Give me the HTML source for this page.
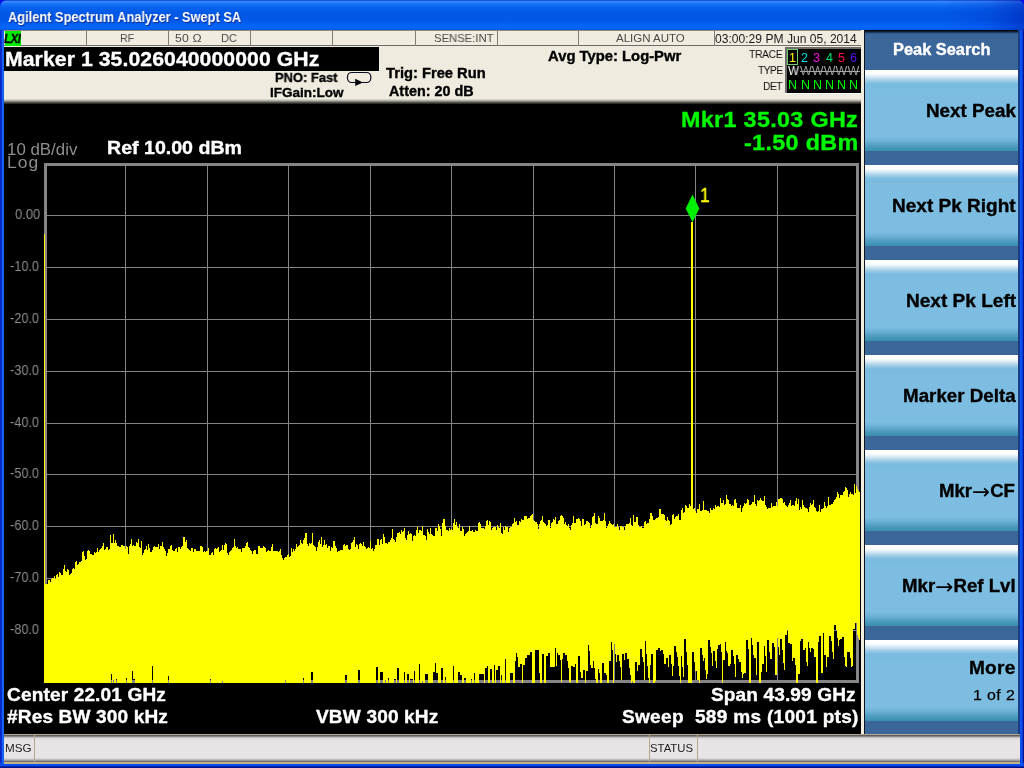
<!DOCTYPE html>
<html lang="en"><head><meta charset="utf-8">
<title>Agilent Spectrum Analyzer - Swept SA</title>
<style>
html,body{margin:0;padding:0;background:#000;}
body{width:1024px;height:768px;position:relative;overflow:hidden;font-family:"Liberation Sans",sans-serif;}
.a{position:absolute;}
.t{position:absolute;line-height:1;white-space:pre;will-change:transform;}
.ar{font-family:"DejaVu Sans",sans-serif;font-weight:normal;font-size:21px;line-height:0;position:relative;top:2px;-webkit-text-stroke:0;}
#win{left:0;top:0;width:1024px;height:768px;background:#0a58e8;}
#title{left:0;top:0;width:1024px;height:30px;border-radius:7px 7px 0 0;
 background:linear-gradient(to bottom,#0a3cd6 0px,#3688f8 1.5px,#1872f6 4px,#0662ee 8px,#0258e6 13px,#0257e8 20px,#0362f6 25px,#0466fa 28px,#0356e4 30px);}
#lb{left:0;top:30px;width:4px;height:738px;background:linear-gradient(to right,#0a22c4 0px,#0a30d4 1.5px,#1766f2 2px,#1262ee 4px);}
#rb{left:1020px;top:30px;width:4px;height:738px;background:linear-gradient(to right,#0a52f0 0px,#0a4eee 2px,#0838d0 2.6px,#001694 3.3px,#00108a 4px);}
#bb{left:0;top:763px;width:1024px;height:5px;background:linear-gradient(to bottom,#0a52f0 0px,#0a4eee 2.4px,#0632c8 3.2px,#001490 4px,#00108a 5px);}
#hdr{left:4px;top:30px;width:857px;height:69px;background:#efebdf;}
#hshadow{left:4px;top:99px;width:857px;height:6px;background:linear-gradient(to bottom,#e6e2d6 0,#c4c1b8 1.2px,#8a8882 2.4px,#45443f 3.8px,#000 6px);}
#row{left:4px;top:30px;width:857px;height:16px;border-top:1px solid #8c897f;border-bottom:1px solid #6e6c66;box-sizing:border-box;background:#f0ecdf;}
.sep{position:absolute;top:31px;height:15px;width:1px;background:#7f7d76;}
#black{left:4px;top:104px;width:857px;height:630px;background:#000;}
#strip{left:861px;top:30px;width:3px;height:704px;background:#f2eee0;}
#strip2{left:864px;top:30px;width:1px;height:704px;background:#10141c;}
#menu{left:865px;top:30px;width:155px;height:704px;background:#3a6699;}
.key{position:absolute;left:865px;width:153px;height:81px;
 background:linear-gradient(to bottom,#ffffff 0px,#ffffff 3px,#eef6fb 5px,#c6e0f0 8px,#9acbe6 11px,#7fbde0 13.5px,#79bbdf 16px,#7cbde1 20px,#7cbde1 67px,#72b5da 70px,#62a9ce 73px,#4f9cc0 76px,#4194b4 79px,#3a8eae 81px);}
#stat{left:4px;top:734px;width:1016px;height:29.5px;
 background:linear-gradient(to bottom,#b6a68c 0px,#b6a68c 1px,#4c4a4c 1px,#787678 2.2px,#b8b5b7 3.2px,#dcd9db 4.5px,#e8e4e6 6px,#e8e4e6 23.5px,#d2cfd1 25px,#9c9a9c 26.5px,#4c4a4c 28.4px,#c4b28c 28.5px,#c4b28c 29.5px);}
</style></head><body>
<div id="win" class="a"></div>
<div class="a" style="left:0;top:0;width:1024px;height:9px;background:#0410e4;"></div>
<div id="title" class="a"></div>
<div class="a" style="left:940px;top:0;width:84px;height:30px;border-radius:0 7px 0 0;background:linear-gradient(to right,rgba(0,30,180,0) 0,rgba(0,30,180,0.18) 50px,rgba(0,24,170,0.5) 84px);"></div>
<div id="lb" class="a"></div><div id="rb" class="a"></div><div id="bb" class="a"></div>

<span class="t" style="top:10.35px;font-size:14px;color:#fff;font-weight:bold;left:8.27px;transform:scaleX(0.9154);transform-origin:left center;text-shadow:1px 1px 1px #0a2a8c;">Agilent Spectrum Analyzer - Swept SA</span>
<div id="hdr" class="a"></div><div id="hshadow" class="a"></div><div id="row" class="a"></div>
<div class="sep" style="left:86px"></div>
<div class="sep" style="left:168px"></div>
<div class="sep" style="left:250px"></div>
<div class="sep" style="left:332px"></div>
<div class="sep" style="left:415px"></div>
<div class="sep" style="left:497px"></div>
<div class="sep" style="left:578px"></div>
<div class="sep" style="left:714px"></div>
<div class="a" style="left:5px;top:31px;width:16px;height:15px;background:#00f000;"></div>
<span class="t" style="top:33.02px;font-size:12.5px;color:#000;font-weight:bold;left:4.33px;letter-spacing:-0.389px;transform:scaleX(0.9000);transform-origin:left center;font-style:italic;-webkit-text-stroke:0.35px currentColor;">LXI</span>
<span class="t" style="top:33.07px;font-size:11.5px;color:#4c4a46;left:119.57px;transform:scaleX(0.9309);transform-origin:left center;">RF</span>
<span class="t" style="top:33.07px;font-size:11.5px;color:#4c4a46;left:175.17px;letter-spacing:0.165px;transform:scaleX(1.0600);transform-origin:left center;">50 Ω</span>
<span class="t" style="top:33.07px;font-size:11.5px;color:#4c4a46;left:220.94px;transform:scaleX(0.9600);transform-origin:left center;">DC</span>
<span class="t" style="top:33.07px;font-size:11.5px;color:#4c4a46;left:434.26px;transform:scaleX(0.9792);transform-origin:left center;">SENSE:INT</span>
<span class="t" style="top:33.07px;font-size:11.5px;color:#4c4a46;left:615.75px;transform:scaleX(0.9963);transform-origin:left center;">ALIGN AUTO</span>
<span class="t" style="top:32.64px;font-size:12px;color:#1a1a1a;left:715.30px;transform:scaleX(1.0071);transform-origin:left center;">03:00:29 PM Jun 05, 2014</span>
<div class="a" style="left:4px;top:47px;width:375px;height:24px;background:#000;"></div>
<span class="t" style="top:48.87px;font-size:20px;color:#fff;font-weight:bold;left:5.17px;letter-spacing:0.068px;transform:scaleX(1.0600);transform-origin:left center;-webkit-text-stroke:0.35px currentColor;">Marker 1 35.026040000000 GHz</span>
<span class="t" style="top:71.47px;font-size:13.5px;color:#000;font-weight:bold;left:274.79px;transform:scaleX(0.9570);transform-origin:left center;-webkit-text-stroke:0.35px currentColor;">PNO: Fast</span>
<span class="t" style="top:86.07px;font-size:13.5px;color:#000;font-weight:bold;left:269.50px;-webkit-text-stroke:0.35px currentColor;">IFGain:Low</span>
<svg class="a" style="left:344px;top:69px" width="30" height="20" viewBox="344 69 30 20"><rect x="347.5" y="72.5" width="23.3" height="10" rx="4.2" ry="4.2" fill="none" stroke="#0c0c20" stroke-width="1.2"/><path d="M355.2 78.7 L363 82.4 L355.2 86.1 Z" fill="#08080f"/></svg>
<span class="t" style="top:65.65px;font-size:14px;color:#000;font-weight:bold;left:385.99px;transform:scaleX(1.0507);transform-origin:left center;-webkit-text-stroke:0.35px currentColor;">Trig: Free Run</span>
<span class="t" style="top:83.55px;font-size:14px;color:#000;font-weight:bold;left:389.14px;transform:scaleX(1.0258);transform-origin:left center;-webkit-text-stroke:0.35px currentColor;">Atten: 20 dB</span>
<span class="t" style="top:49.15px;font-size:14px;color:#000;font-weight:bold;left:547.74px;transform:scaleX(1.0578);transform-origin:left center;-webkit-text-stroke:0.35px currentColor;">Avg Type: Log-Pwr</span>
<span class="t" style="top:48.87px;font-size:11.5px;color:#111;left:749.27px;letter-spacing:-0.396px;transform:scaleX(0.9000);transform-origin:left center;">TRACE</span>
<span class="t" style="top:65.27px;font-size:11.5px;color:#111;left:757.77px;letter-spacing:-0.676px;transform:scaleX(0.9000);transform-origin:left center;">TYPE</span>
<span class="t" style="top:81.07px;font-size:11.5px;color:#111;left:763.10px;letter-spacing:-0.597px;transform:scaleX(0.9000);transform-origin:left center;">DET</span>
<div class="a" style="left:785px;top:47px;width:76px;height:47px;background:#fff;"></div>
<div class="a" style="left:785px;top:47px;width:76px;height:46px;background:#6e6c66;"></div>
<div class="a" style="left:787px;top:49px;width:74px;height:44px;background:#000;"></div>
<div class="a" style="left:787px;top:49px;width:11px;height:16px;border:1px solid #70d070;box-sizing:border-box;"></div>
<span class="t" style="top:51.62px;font-size:12.5px;color:#ffff00;left:788.98px;">1</span>
<span class="t" style="top:78.62px;font-size:12.5px;color:#00ff00;left:788.40px;">N</span>
<span class="t" style="top:51.62px;font-size:12.5px;color:#00e0e8;left:801.38px;">2</span>
<span class="t" style="top:78.62px;font-size:12.5px;color:#00ff00;left:800.55px;">N</span>
<span class="t" style="top:51.62px;font-size:12.5px;color:#f010e0;left:813.40px;">3</span>
<span class="t" style="top:78.62px;font-size:12.5px;color:#00ff00;left:812.70px;">N</span>
<span class="t" style="top:51.62px;font-size:12.5px;color:#00e070;left:825.68px;">4</span>
<span class="t" style="top:78.62px;font-size:12.5px;color:#00ff00;left:824.85px;">N</span>
<span class="t" style="top:51.62px;font-size:12.5px;color:#ff1050;left:837.70px;">5</span>
<span class="t" style="top:78.62px;font-size:12.5px;color:#00ff00;left:837.00px;">N</span>
<span class="t" style="top:51.62px;font-size:12.5px;color:#5a10f8;left:849.85px;">6</span>
<span class="t" style="top:78.62px;font-size:12.5px;color:#00ff00;left:849.15px;">N</span>
<span class="t" style="top:65.02px;font-size:12.5px;color:#fff;left:787.80px;transform:scaleX(0.9362);transform-origin:left center;">W</span>
<span class="t" style="top:65.02px;font-size:12.5px;color:#9a9a9a;left:800.20px;letter-spacing:0.075px;">WWWWW</span>
<div class="a" style="left:800px;top:71px;width:60px;height:1px;background:#a8a8a8;"></div>
<div id="black" class="a"></div><div id="strip" class="a"></div><div id="strip2" class="a"></div>
<svg class="a" style="left:0;top:0" width="1024" height="768" viewBox="0 0 1024 768" shape-rendering="crispEdges">
<path d="M44 163H859V683H44Z M47 166V680H856V166Z" fill="#868486" fill-rule="evenodd"/>
<path d="M125 166h1v514h-1zM207 166h1v514h-1zM288 166h1v514h-1zM370 166h1v514h-1zM451 166h1v514h-1zM533 166h1v514h-1zM614 166h1v514h-1zM695 166h1v514h-1zM777 166h1v514h-1zM47 215h809v1h-809zM47 267h809v1h-809zM47 319h809v1h-809zM47 371h809v1h-809zM47 423h809v1h-809zM47 474h809v1h-809zM47 526h809v1h-809zM47 578h809v1h-809zM47 630h809v1h-809z" fill="#868486"/>
<path d="M44 584V584H45V584H46V584H47V584H48V580H49V580H50V582H51V579H52V578H53V578H54V576H55V579H56V575H57V574H58V577H59V572H60V573H61V575H62V575H63V569H64V565H65V571H66V572H67V569H68V570H69V575H70V574H71V573H72V569H73V568H74V569H75V562H76V561H77V565H78V564H79V562H80V562H81V561H82V552H83V551H84V556H85V560H86V559H87V551H88V550H89V551H90V554H91V554H92V555H93V555H94V552H95V553H96V552H97V548H98V552H99V550H100V549H101V548H102V546H103V543H104V550H105V549H106V547H107V547H108V550H109V549H110V535H111V543H112V543H113V534H114V543H115V540H116V543H117V546H118V546H119V547H120V547H121V545H122V545H123V546H124V546H125V549H126V546H127V547H128V554H129V546H130V544H131V539H132V546H133V545H134V546H135V546H136V542H137V543H138V539H139V547H140V548H141V541H142V555H143V553H144V550H145V549H146V546H147V550H148V544H149V548H150V552H151V552H152V550H153V547H154V546H155V547H156V547H157V547H158V544H159V549H160V546H161V546H162V542H163V547H164V549H165V551H166V556H167V553H168V549H169V549H170V546H171V545H172V550H173V551H174V551H175V549H176V548H177V552H178V547H179V547H180V549H181V547H182V546H183V537H184V537H185V542H186V540H187V548H188V549H189V550H190V551H191V548H192V548H193V552H194V549H195V549H196V551H197V551H198V551H199V551H200V546H201V546H202V547H203V552H204V551H205V552H206V551H207V551H208V548H209V555H210V555H211V553H212V552H213V555H214V549H215V548H216V549H217V548H218V547H219V552H220V551H221V550H222V545H223V550H224V545H225V543H226V544H227V553H228V555H229V552H230V551H231V550H232V548H233V547H234V539H235V546H236V548H237V547H238V549H239V549H240V549H241V552H242V548H243V548H244V548H245V546H246V543H247V542H248V547H249V548H250V550H251V551H252V554H253V551H254V550H255V550H256V554H257V554H258V546H259V546H260V548H261V548H262V548H263V546H264V547H265V548H266V552H267V551H268V550H269V551H270V551H271V547H272V544H273V551H274V551H275V551H276V551H277V551H278V552H279V551H280V549H281V555H282V558H283V560H284V558H285V557H286V557H287V555H288V554H289V557H290V556H291V548H292V552H293V549H294V551H295V549H296V544H297V547H298V546H299V545H300V540H301V543H302V544H303V540H304V538H305V533H306V533H307V544H308V546H309V543H310V544H311V543H312V533H313V545H314V546H315V547H316V551H317V547H318V542H319V540H320V544H321V537H322V547H323V545H324V540H325V545H326V544H327V548H328V546H329V546H330V551H331V547H332V548H333V541H334V541H335V546H336V548H337V552H338V551H339V551H340V550H341V550H342V550H343V545H344V544H345V546H346V545H347V545H348V549H349V550H350V549H351V543H352V542H353V540H354V537H355V547H356V544H357V545H358V549H359V544H360V543H361V544H362V546H363V542H364V546H365V547H366V549H367V548H368V547H369V548H370V541H371V549H372V548H373V551H374V549H375V545H376V545H377V539H378V539H379V545H380V540H381V539H382V544H383V534H384V537H385V543H386V543H387V544H388V542H389V542H390V540H391V538H392V529H393V539H394V540H395V542H396V537H397V533H398V533H399V532H400V534H401V530H402V532H403V531H404V528H405V538H406V540H407V535H408V531H409V534H410V533H411V534H412V541H413V536H414V535H415V536H416V530H417V527H418V533H419V530H420V530H421V531H422V526H423V535H424V535H425V536H426V540H427V529H428V532H429V534H430V528H431V534H432V535H433V536H434V536H435V528H436V528H437V531H438V524H439V526H440V529H441V536H442V523H443V519H444V519H445V526H446V530H447V530H448V531H449V528H450V530H451V529H452V530H453V523H454V519H455V525H456V522H457V527H458V528H459V524H460V531H461V531H462V527H463V529H464V536H465V534H466V533H467V532H468V531H469V526H470V531H471V531H472V530H473V532H474V532H475V530H476V531H477V531H478V523H479V522H480V524H481V528H482V528H483V528H484V529H485V526H486V521H487V520H488V525H489V521H490V522H491V530H492V528H493V527H494V527H495V527H496V530H497V525H498V527H499V528H500V523H501V533H502V534H503V527H504V530H505V526H506V527H507V527H508V532H509V528H510V527H511V527H512V524H513V523H514V518H515V522H516V521H517V525H518V525H519V521H520V522H521V519H522V520H523V520H524V516H525V516H526V516H527V519H528V518H529V518H530V516H531V515H532V514H533V520H534V521H535V522H536V522H537V524H538V529H539V524H540V521H541V520H542V516H543V522H544V523H545V524H546V526H547V525H548V520H549V520H550V528H551V523H552V522H553V519H554V520H555V517H556V524H557V524H558V521H559V520H560V516H561V515H562V516H563V518H564V524H565V522H566V525H567V526H568V524H569V528H570V530H571V525H572V523H573V516H574V523H575V523H576V519H577V519H578V518H579V519H580V521H581V526H582V519H583V519H584V525H585V524H586V521H587V521H588V522H589V523H590V528H591V525H592V517H593V516H594V513H595V523H596V524H597V524H598V516H599V518H600V521H601V521H602V521H603V520H604V513H605V521H606V528H607V526H608V524H609V521H610V523H611V524H612V525H613V524H614V527H615V527H616V527H617V524H618V527H619V530H620V526H621V526H622V527H623V527H624V530H625V526H626V524H627V524H628V524H629V523H630V518H631V525H632V526H633V515H634V522H635V522H636V517H637V517H638V525H639V527H640V527H641V526H642V528H643V528H644V522H645V521H646V524H647V523H648V523H649V519H650V513H651V513H652V516H653V520H654V520H655V519H656V518H657V518H658V517H659V509H660V509H661V514H662V514H663V514H664V515H665V520H666V521H667V517H668V520H669V521H670V525H671V524H672V515H673V514H674V519H675V517H676V516H677V516H678V514H679V520H680V520H681V510H682V508H683V513H684V512H685V505H686V506H687V508H688V508H689V504H690V506H691V506H692V502H693V509H694V508H695V511H696V513H697V509H698V509H699V504H700V511H701V511H702V510H703V501H704V510H705V510H706V510H707V511H708V511H709V513H710V508H711V510H712V510H713V508H714V509H715V505H716V507H717V506H718V506H719V507H720V498H721V503H722V503H723V500H724V505H725V504H726V495H727V499H728V500H729V504H730V504H731V506H732V505H733V506H734V500H735V499H736V503H737V508H738V508H739V508H740V505H741V512H742V508H743V506H744V503H745V504H746V503H747V499H748V500H749V505H750V505H751V504H752V502H753V502H754V495H755V504H756V506H757V500H758V501H759V500H760V498H761V500H762V501H763V501H764V496H765V505H766V507H767V509H768V508H769V508H770V508H771V503H772V507H773V506H774V506H775V506H776V502H777V506H778V499H779V499H780V498H781V498H782V499H783V503H784V502H785V505H786V506H787V507H788V505H789V503H790V500H791V506H792V505H793V505H794V506H795V501H796V498H797V504H798V499H799V510H800V507H801V509H802V500H803V505H804V507H805V508H806V508H807V509H808V512H809V507H810V503H811V505H812V504H813V500H814V507H815V508H816V511H817V512H818V511H819V505H820V512H821V509H822V509H823V508H824V502H825V506H826V508H827V506H828V497H829V505H830V505H831V504H832V504H833V502H834V500H835V499H836V497H837V492H838V494H839V498H840V495H841V495H842V495H843V492H844V491H845V487H846V488H847V490H848V497H849V494H850V492H851V494H852V494H853V495H854V484H855V493H856V486H857V489H858V491H859V492H860V640H859V638H858V635H857V623H856V623H855V629H854V629H853V666H852V667H851V658H850V652H849V652H848V652H847V667H846V666H845V657H844V637H843V637H842V639H841V639H840V640H839V646H838V638H837V630H836V625H835V625H834V659H833V652H832V641H831V636H830V636H829V657H828V657H827V667H826V655H825V655H824V633H823V673H822V673H821V636H820V636H819V642H818V683H817V683H816V657H815V657H814V649H813V648H812V648H811V652H810V648H809V642H808V666H807V662H806V648H805V650H804V650H803V639H802V639H801V641H800V674H799V674H798V683H797V683H796V665H795V658H794V658H793V661H792V644H791V644H790V643H789V643H788V630H787V635H786V635H785V670H784V663H783V650H782V639H781V639H780V655H779V647H778V638H777V675H776V675H775V647H774V643H773V643H772V659H771V659H770V652H769V640H768V640H767V672H766V656H765V646H764V664H763V664H762V672H761V683H760V683H759V642H758V642H757V675H756V658H755V658H754V655H753V645H752V638H751V683H750V683H749V649H748V640H747V640H746V673H745V673H744V674H743V678H742V672H741V662H740V662H739V659H738V655H737V655H736V677H735V664H734V656H733V650H732V650H731V664H730V666H729V666H728V653H727V651H726V642H725V660H724V660H723V683H722V652H721V644H720V645H719V645H718V649H717V668H716V661H715V651H714V651H713V666H712V653H711V647H710V640H709V640H708V674H707V679H706V670H705V658H704V661H703V655H702V648H701V648H700V683H699V680H698V680H697V671H696V671H695V662H694V652H693V652H692V683H691V683H690V683H689V683H688V665H687V652H686V639H685V639H684V677H683V667H682V656H681V683H680V676H679V666H678V657H677V652H676V646H675V646H674V666H673V676H672V664H671V655H670V655H669V667H668V658H667V658H666V664H665V664H664V654H663V650H662V650H661V651H660V648H659V648H658V650H657V650H656V681H655V683H654V683H653V654H652V654H651V665H650V683H649V678H648V666H647V654H646V641H645V680H644V662H643V657H642V649H641V649H640V665H639V665H638V671H637V662H636V662H635V683H634V683H633V681H632V683H631V675H630V668H629V659H628V659H627V653H626V653H625V660H624V654H623V654H622V680H621V667H620V661H619V655H618V655H617V662H616V654H615V644H614V683H613V650H612V642H611V661H610V661H609V683H608V683H607V675H606V673H605V673H604V663H603V663H602V683H601V683H600V673H599V669H598V683H597V683H596V679H595V668H594V661H593V668H592V668H591V665H590V651H589V645H588V671H587V671H586V683H585V670H584V670H583V678H582V678H581V672H580V656H579V656H578V683H577V683H576V664H575V667H574V667H573V666H572V666H571V683H570V682H569V668H568V661H567V655H566V655H565V653H564V653H563V659H562V682H561V660H560V655H559V655H558V653H557V666H556V648H555V667H554V667H553V667H552V667H551V667H550V653H549V653H548V656H547V656H546V683H545V683H544V654H543V654H542V683H541V683H540V673H539V650H538V650H537V650H536V650H535V683H534V683H533V683H532V652H531V652H530V655H529V655H528V655H527V658H526V658H525V665H524V665H523V683H522V664H521V664H520V667H519V667H518V657H517V653H516V661H515V683H514V683H513V673H512V673H511V673H510V683H509V683H508V683H507V683H506V659H505V683H504V683H503V683H502V675H501V683H500V666H499V666H498V670H497V670H496V683H495V665H494V683H493V683H492V669H491V669H490V683H489V683H488V666H487V668H486V668H485V683H484V674H483V674H482V674H481V674H480V674H479V683H478V683H477V683H476V683H475V673H474V683H473V683H472V679H471V683H470V683H469V683H468V683H467V683H466V678H465V678H464V683H463V683H462V675H461V675H460V672H459V672H458V683H457V683H456V683H455V683H454V666H453V683H452V683H451V683H450V683H449V683H448V683H447V683H446V677H445V683H444V683H443V668H442V668H441V683H440V683H439V683H438V673H437V673H436V663H435V672H434V672H433V683H432V683H431V683H430V683H429V683H428V674H427V674H426V674H425V683H424V683H423V681H422V683H421V683H420V664H419V683H418V683H417V683H416V683H415V671H414V683H413V679H412V679H411V679H410V683H409V674H408V674H407V683H406V683H405V672H404V683H403V683H402V683H401V683H400V683H399V668H398V668H397V683H396V679H395V679H394V683H393V683H392V683H391V683H390V683H389V678H388V683H387V683H386V680H385V683H384V683H383V672H382V672H381V672H380V683H379V683H378V667H377V667H376V683H375V683H374V683H373V683H372V683H371V683H370V683H369V683H368V683H367V683H366V683H365V683H364V683H363V683H362V683H361V683H360V670H359V670H358V683H357V683H356V683H355V683H354V683H353V683H352V683H351V683H350V683H349V683H348V683H347V675H346V675H345V683H344V683H343V683H342V683H341V683H340V683H339V683H338V683H337V683H336V683H335V683H334V683H333V683H332V683H331V683H330V683H329V683H328V683H327V683H326V683H325V683H324V683H323V683H322V683H321V683H320V683H319V683H318V683H317V683H316V683H315V683H314V683H313V672H312V672H311V683H310V683H309V683H308V683H307V683H306V683H305V683H304V678H303V683H302V683H301V683H300V683H299V683H298V683H297V683H296V683H295V683H294V683H293V683H292V683H291V683H290V683H289V683H288V683H287V683H286V680H285V683H284V683H283V683H282V683H281V683H280V683H279V683H278V683H277V683H276V683H275V683H274V683H273V683H272V683H271V683H270V683H269V683H268V683H267V683H266V683H265V683H264V683H263V683H262V683H261V683H260V683H259V683H258V683H257V683H256V683H255V683H254V683H253V683H252V683H251V683H250V683H249V683H248V683H247V683H246V683H245V683H244V683H243V683H242V683H241V683H240V683H239V683H238V683H237V683H236V683H235V683H234V683H233V683H232V683H231V683H230V683H229V683H228V683H227V683H226V683H225V683H224V683H223V681H222V683H221V683H220V683H219V683H218V683H217V683H216V683H215V683H214V683H213V683H212V683H211V679H210V683H209V683H208V683H207V683H206V683H205V683H204V683H203V683H202V683H201V683H200V683H199V683H198V683H197V683H196V683H195V683H194V683H193V683H192V683H191V683H190V683H189V683H188V683H187V683H186V683H185V683H184V683H183V683H182V683H181V683H180V683H179V683H178V683H177V683H176V683H175V683H174V683H173V683H172V683H171V683H170V683H169V676H168V683H167V683H166V683H165V683H164V683H163V683H162V683H161V683H160V683H159V683H158V683H157V683H156V683H155V683H154V683H153V666H152V683H151V683H150V683H149V683H148V683H147V683H146V683H145V683H144V683H143V683H142V683H141V683H140V683H139V683H138V683H137V683H136V683H135V679H134V679H133V671H132V683H131V683H130V683H129V683H128V683H127V678H126V683H125V683H124V683H123V683H122V683H121V683H120V683H119V683H118V683H117V679H116V683H115V683H114V680H113V683H112V674H111V683H110V683H109V683H108V683H107V683H106V683H105V683H104V683H103V683H102V683H101V683H100V683H99V683H98V683H97V683H96V683H95V683H94V683H93V683H92V683H91V683H90V683H89V683H88V683H87V683H86V683H85V683H84V683H83V683H82V683H81V683H80V683H79V683H78V683H77V683H76V683H75V683H74V683H73V683H72V683H71V683H70V683H69V683H68V683H67V683H66V683H65V683H64V683H63V683H62V683H61V683H60V683H59V683H58V683H57V683H56V683H55V683H54V683H53V683H52V683H51V683H50V683H49V683H48V683H47V683H46V683H45V683H44Z" fill="#ffff00"/>
<rect x="44" y="234" width="1" height="449" fill="#ffff00"/>
<rect x="691" y="222" width="2" height="300" fill="#ffff00"/>
<path d="M692.5 194.5 L699.3 208.4 L692.5 222.3 L685.7 208.4 Z" fill="#00f000" shape-rendering="auto"/>
</svg>
<span class="t" style="top:186.49px;font-size:19.5px;color:#ffff00;left:699.85px;letter-spacing:-0.722px;transform:scaleX(0.9000);transform-origin:left center;-webkit-text-stroke:0.35px currentColor;">1</span>
<span class="t" style="top:108.58px;font-size:22px;color:#00f800;font-weight:bold;left:680.71px;letter-spacing:0.317px;transform:scaleX(1.0600);transform-origin:left center;-webkit-text-stroke:0.35px currentColor;">Mkr1 35.03 GHz</span>
<span class="t" style="top:132.08px;font-size:22px;color:#00f800;font-weight:bold;left:744.21px;letter-spacing:0.333px;transform:scaleX(1.0600);transform-origin:left center;-webkit-text-stroke:0.35px currentColor;">-1.50 dBm</span>
<span class="t" style="top:141.03px;font-size:16.5px;color:#8e8c8e;left:7.47px;transform:scaleX(1.0222);transform-origin:left center;">10 dB/div</span>
<span class="t" style="top:153.83px;font-size:16.5px;color:#8e8c8e;left:7.42px;letter-spacing:0.913px;transform:scaleX(1.0600);transform-origin:left center;">Log</span>
<span class="t" style="top:139.04px;font-size:18.5px;color:#fff;font-weight:bold;left:106.68px;transform:scaleX(1.0584);transform-origin:left center;-webkit-text-stroke:0.35px currentColor;">Ref 10.00 dBm</span>
<span class="t" style="top:207.35px;font-size:14px;color:#8e8c8e;left:15.44px;transform:scaleX(0.9219);transform-origin:left center;">0.00</span>
<span class="t" style="top:259.35px;font-size:14px;color:#8e8c8e;left:10.49px;transform:scaleX(0.9113);transform-origin:left center;">-10.0</span>
<span class="t" style="top:311.35px;font-size:14px;color:#8e8c8e;left:10.49px;transform:scaleX(0.9113);transform-origin:left center;">-20.0</span>
<span class="t" style="top:363.35px;font-size:14px;color:#8e8c8e;left:10.49px;transform:scaleX(0.9113);transform-origin:left center;">-30.0</span>
<span class="t" style="top:415.35px;font-size:14px;color:#8e8c8e;left:10.49px;transform:scaleX(0.9113);transform-origin:left center;">-40.0</span>
<span class="t" style="top:466.35px;font-size:14px;color:#8e8c8e;left:10.49px;transform:scaleX(0.9113);transform-origin:left center;">-50.0</span>
<span class="t" style="top:518.35px;font-size:14px;color:#8e8c8e;left:10.49px;transform:scaleX(0.9113);transform-origin:left center;">-60.0</span>
<span class="t" style="top:570.35px;font-size:14px;color:#8e8c8e;left:10.49px;transform:scaleX(0.9113);transform-origin:left center;">-70.0</span>
<span class="t" style="top:622.35px;font-size:14px;color:#8e8c8e;left:10.49px;transform:scaleX(0.9113);transform-origin:left center;">-80.0</span>
<span class="t" style="top:685.96px;font-size:18px;color:#fff;font-weight:bold;left:6.71px;letter-spacing:0.122px;transform:scaleX(1.0600);transform-origin:left center;-webkit-text-stroke:0.35px currentColor;">Center 22.01 GHz</span>
<span class="t" style="top:708.16px;font-size:18px;color:#fff;font-weight:bold;left:6.74px;letter-spacing:0.121px;transform:scaleX(1.0600);transform-origin:left center;-webkit-text-stroke:0.35px currentColor;">#Res BW 300 kHz</span>
<span class="t" style="top:708.16px;font-size:18px;color:#fff;font-weight:bold;left:315.74px;letter-spacing:0.137px;transform:scaleX(1.0600);transform-origin:left center;-webkit-text-stroke:0.35px currentColor;">VBW 300 kHz</span>
<span class="t" style="top:685.96px;font-size:18px;color:#fff;font-weight:bold;left:711.47px;letter-spacing:0.106px;transform:scaleX(1.0600);transform-origin:left center;-webkit-text-stroke:0.35px currentColor;">Span 43.99 GHz</span>
<span class="t" style="top:708.16px;font-size:18px;color:#fff;font-weight:bold;left:622.47px;letter-spacing:0.259px;transform:scaleX(1.0600);transform-origin:left center;-webkit-text-stroke:0.35px currentColor;">Sweep  589 ms (1001 pts)</span>
<div id="menu" class="a"></div>
<div class="a" style="left:865px;top:30px;width:155px;height:4px;background:linear-gradient(to bottom,#000 0,#0a1424 1.2px,#22406c 2.6px,#3a6699 4px);"></div>
<div class="a" style="left:1018px;top:30px;width:2px;height:704px;background:#1c3e86;"></div>
<span class="t" style="top:41.56px;font-size:16px;color:#fff;font-weight:bold;left:893.18px;transform:scaleX(1.0241);transform-origin:left center;-webkit-text-stroke:0.35px currentColor;">Peak Search</span>
<div class="key" style="top:70px"></div>
<span class="t" style="top:102.46px;font-size:18px;color:#000;font-weight:bold;left:925.59px;transform:scaleX(1.0442);transform-origin:left center;-webkit-text-stroke:0.35px currentColor;">Next Peak</span>
<div class="key" style="top:165px"></div>
<span class="t" style="top:197.46px;font-size:18px;color:#000;font-weight:bold;left:892.08px;transform:scaleX(1.0563);transform-origin:left center;-webkit-text-stroke:0.35px currentColor;">Next Pk Right</span>
<div class="key" style="top:260px"></div>
<span class="t" style="top:292.46px;font-size:18px;color:#000;font-weight:bold;left:905.58px;transform:scaleX(1.0585);transform-origin:left center;-webkit-text-stroke:0.35px currentColor;">Next Pk Left</span>
<div class="key" style="top:355px"></div>
<span class="t" style="top:387.46px;font-size:18px;color:#000;font-weight:bold;left:902.50px;transform:scaleX(1.0430);transform-origin:left center;-webkit-text-stroke:0.35px currentColor;">Marker Delta</span>
<div class="key" style="top:450px"></div>
<span class="t" style="top:482.46px;font-size:18px;color:#000;font-weight:bold;left:939.06px;transform:scaleX(1.0304);transform-origin:left center;-webkit-text-stroke:0.35px currentColor;">Mkr<span class="ar">→</span>CF</span>
<div class="key" style="top:545px"></div>
<span class="t" style="top:577.46px;font-size:18px;color:#000;font-weight:bold;left:901.80px;transform:scaleX(1.0365);transform-origin:left center;-webkit-text-stroke:0.35px currentColor;">Mkr<span class="ar">→</span>Ref Lvl</span>
<div class="key" style="top:640px"></div>
<span class="t" style="top:659.26px;font-size:18px;color:#000;font-weight:bold;left:969.27px;letter-spacing:0.212px;transform:scaleX(1.0600);transform-origin:left center;-webkit-text-stroke:0.35px currentColor;">More</span>
<span class="t" style="top:686.70px;font-size:15px;color:#000;left:973.34px;letter-spacing:0.397px;transform:scaleX(1.0600);transform-origin:left center;-webkit-text-stroke:0.25px currentColor;">1 of 2</span>
<div id="stat" class="a"></div>
<div class="a" style="left:34px;top:735px;width:1px;height:28px;background:#b6a68c;"></div>
<div class="a" style="left:649px;top:735px;width:1px;height:28px;background:#b6a68c;"></div>
<div class="a" style="left:697px;top:735px;width:1px;height:28px;background:#b6a68c;"></div>
<span class="t" style="top:742.59px;font-size:11px;color:#222;left:4.74px;letter-spacing:0.026px;transform:scaleX(1.0600);transform-origin:left center;">MSG</span>
<span class="t" style="top:742.59px;font-size:11px;color:#222;left:650.48px;transform:scaleX(1.0307);transform-origin:left center;">STATUS</span>
</body></html>
